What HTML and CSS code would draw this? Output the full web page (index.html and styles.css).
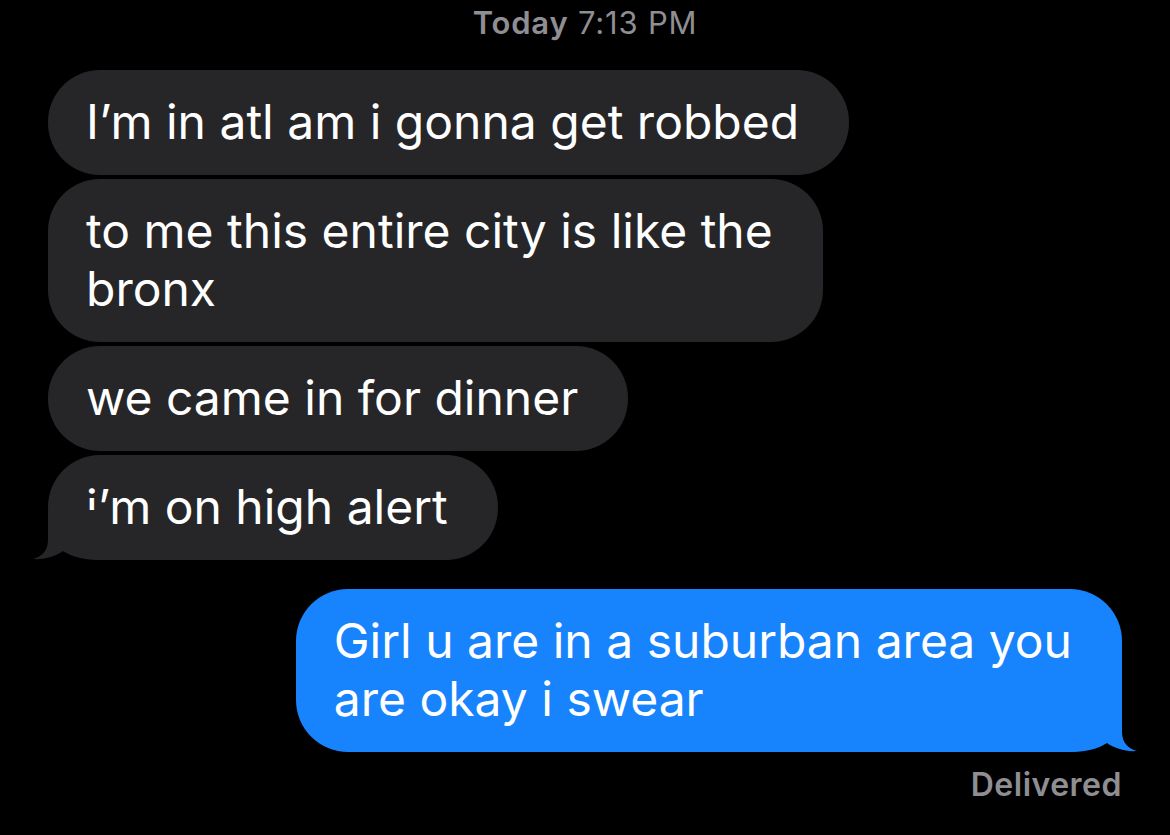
FILE: index.html
```html
<!DOCTYPE html>
<html lang="en">
<head>
    <meta charset="UTF-8">
    <meta name="viewport" content="width=device-width, initial-scale=1.0">
    <title>Messages</title>
    <link rel="stylesheet" href="styles.css">
</head>
<body>
    <div class="thread">
        <div class="stamp"><strong>Today</strong> 7:13 PM</div>

        <div class="group incoming">
            <div class="bubble">I’m in atl am i gonna get robbed</div>
            <div class="bubble">to me this entire city is like the<br>bronx</div>
            <div class="bubble">we came in for dinner</div>
            <div class="bubble last">i’m on high alert
                <svg class="tail" width="70" height="50" viewBox="0 0 70 50"><path d="M16,0 L16,30 C16,40 10,47 1,49 C12,50 24,46 31,41 C40,47 52,50 70,50 L70,0 Z"/></svg>
            </div>
        </div>

        <div class="group outgoing">
            <div class="bubble last">Girl u are in a suburban area you<br>are okay i swear
                <svg class="tail" width="70" height="50" viewBox="0 0 70 50"><path d="M54,0 L54,30 C54,40 60,47 69,49 C58,50 46,46 39,41 C30,47 18,50 0,50 L0,0 Z"/></svg>
            </div>
            <div class="status">Delivered</div>
        </div>
    </div>
</body>
</html>
```
FILE: styles.css
```css
body {
    margin: 0;
    background: #000;
    font-family: Inter, "Noto Sans", sans-serif;
    color: #fff;
}
.thread {
    padding: 5px 48px 0 48px;
}
.stamp {
    text-align: center;
    color: #8e8e93;
    font-size: 31px;
    letter-spacing: 0.8px;
    line-height: 36px;
    margin-bottom: 29px;
}
.stamp strong {
    font-weight: 600;
}
.group {
    display: flex;
    flex-direction: column;
    gap: 4px;
}
.incoming {
    align-items: flex-start;
}
.outgoing {
    align-items: flex-end;
    margin-top: 29px;
}
.bubble {
    position: relative;
    padding: 23px 50px 24px 38px;
    border-radius: 52px;
    font-size: 48px;
    line-height: 58px;
    white-space: nowrap;
    background: #262629;
}
.outgoing .bubble {
    background: #1783fc;
}
.tail {
    position: absolute;
    bottom: 0;
}
.incoming .tail {
    left: -16px;
    fill: #262629;
}
.outgoing .tail {
    right: -16px;
    fill: #1783fc;
}
.status {
    margin-top: 11px;
    color: #8e8e93;
    font-size: 32px;
    letter-spacing: 0.5px;
    font-weight: 600;
    line-height: 36px;
}
```
